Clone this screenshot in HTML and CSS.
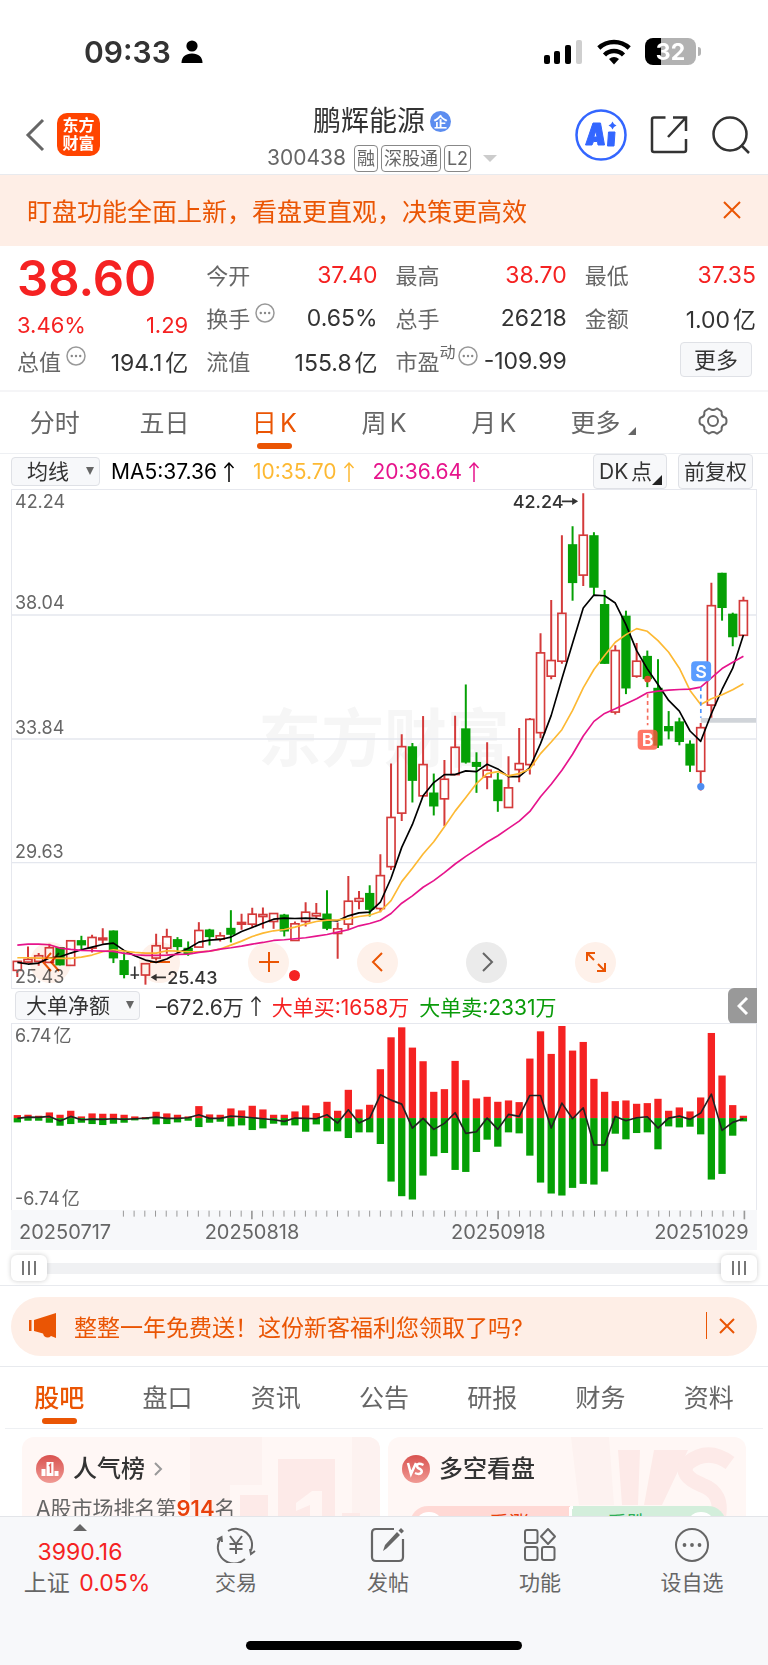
FILE: index.html
```html
<!DOCTYPE html>
<html lang="zh-CN">
<head>
  <meta charset="UTF-8" />
  <meta name="viewport" content="width=device-width, initial-scale=1.0"/>
  <title>鹏辉能源 300438</title>
  <link rel="stylesheet" href="styles.css">
</head>
<body>
  <div class="app">
    <div class="status">
      <span class="time">09:33</span>
      <svg class="person" width="22" height="24" viewBox="0 0 22 24"><circle cx="11" cy="6" r="5.6"/><path d="M0.5 23c0-6 4-9.5 10.500-9.500S21.500 17 21.500 23z"/></svg>
      <span class="grow"></span>
      <svg width="40" height="26" viewBox="0 0 40 26"><rect x="1" y="16" width="6" height="9" rx="2"/><rect x="11" y="12" width="6" height="13" rx="2"/><rect x="22" y="6" width="6" height="19" rx="2"/><rect x="33" y="1" width="6" height="24" rx="2" fill="#cfcfcf"/></svg>
      <svg width="34" height="26" viewBox="0 0 34 26"><g fill="none" stroke="#000" stroke-width="4.500"><path d="M1.800 9a22 22 0 0 1 30.400 0"/><path d="M7.500 16a13.500 13.500 0 0 1 19 0"/></g><path d="M17 25.500l-5-5.500a8 8 0 0 1 10 0z"/></svg>
      <span class="battery"><span class="battery-body">32</span><i></i></span>
    </div>

    <header class="nav">
      <button class="icon-btn back" aria-label="返回"><svg width="20" height="34" viewBox="0 0 20 34"><path d="M18 2L3 17l15 15" fill="none" stroke="#666" stroke-width="3"/></svg></button>
      <span class="logo">东方<br>财富</span>
      <div class="nav-title">
        <h1>鹏辉能源<span class="corp">企</span></h1>
        <div class="code"><span>300438</span><span class="tag">融</span><span class="tag">深股通</span><span class="tag">L2</span><i class="caret"></i></div>
      </div>
      <button class="icon-btn" aria-label="AI">
        <svg width="52" height="52" viewBox="0 0 52 52"><circle cx="26" cy="26" r="24.500" fill="none" stroke="#3366ff" stroke-width="2.500"/><path d="M18 14h7.500l4 22h-6.500l-.500-3.500h-4l-1.500 3.500H10.500zM20.800 22l-2 6h3.200zM33.500 23h6.500l-1 14h-6.500z" fill="#3366ff" fill-rule="evenodd" stroke="#3366ff" stroke-linejoin="round"/><path d="M37.500 12.500l1.500 2.500 2.500 1.500-2.500 1.500-1.500 2.500-1.500-2.500-2.500-1.500 2.500-1.500z" fill="#3366ff"/></svg>
      </button>
      <button class="icon-btn" aria-label="分享">
        <svg width="38" height="40" viewBox="0 0 38 40"><path d="M15.500 2.500H4q-2 0-2 2V35q0 2 2 2H34q2 0 2-2V24M23 2.500H36V16M36 2.500L18 22" fill="none" stroke="#333" stroke-width="2.500"/></svg>
      </button>
      <button class="icon-btn" aria-label="搜索">
        <svg width="40" height="40" viewBox="0 0 40 40"><circle cx="19" cy="19" r="16.500" fill="none" stroke="#333" stroke-width="2.500"/><path d="M30 30l8 8" stroke="#333" stroke-width="2.500"/></svg>
      </button>
    </header>

    <div class="banner">
      <span>盯盘功能全面上新，看盘更直观，决策更高效</span>
      <button class="icon-btn" aria-label="关闭"><svg width="18" height="18" viewBox="0 0 18 18"><path d="M1 1l16 16M17 1L1 17" stroke="#ea5504" stroke-width="2"/></svg></button>
    </div>

    <section class="quote">
      <div class="q-col q-main">
        <strong>38.60</strong>
        <div class="q red"><span>3.46%</span><span>1.29</span></div>
        <div class="q"><label>总值<svg class="dots"><use href="#more-dots"/></svg></label><b>194.1亿</b></div>
      </div>
      <div class="q-col">
        <div class="q"><label>今开</label><b class="red">37.40</b></div>
        <div class="q"><label>换手<svg class="dots"><use href="#more-dots"/></svg></label><b>0.65%</b></div>
        <div class="q"><label>流值</label><b>155.8亿</b></div>
      </div>
      <div class="q-col">
        <div class="q"><label>最高</label><b class="red">38.70</b></div>
        <div class="q"><label>总手</label><b>26218</b></div>
        <div class="q"><label>市盈<sup>动</sup><svg class="dots tight"><use href="#more-dots"/></svg></label><b>-109.99</b></div>
      </div>
      <div class="q-col">
        <div class="q"><label>最低</label><b class="red">37.35</b></div>
        <div class="q"><label>金额</label><b>1.00亿</b></div>
        <div class="q q-end"><button class="box-btn more">更多</button></div>
      </div>
    </section>

    <nav class="tabs">
      <button>分时</button>
      <button>五日</button>
      <button class="active">日K</button>
      <button>周K</button>
      <button>月K</button>
      <button>更多<i class="corner"></i></button>
      <button aria-label="设置"><svg width="30" height="28" viewBox="0 0 30 28"><path d="M10 2Q11 1 12 2Q15 4 18 2Q19 1 20 2L23 4Q24 5 23.600 7Q24 10 27 10.500Q28.500 11 28.500 14Q28.500 17 27 17.500Q24 18 23.600 21Q24 23 23 24L20 26Q19 27 18 26Q15 24 12 26Q11 27 10 26L7 24Q6 23 6.400 21Q6 18 3 17.500Q1.500 17 1.500 14Q1.500 11 3 10.500Q6 10 6.400 7Q6 5 7 4Z" fill="none" stroke="#666" stroke-width="2"/><circle cx="15" cy="14" r="5" fill="none" stroke="#666" stroke-width="2"/></svg></button>
    </nav>

    <section class="chart-area">
      <div class="bar ma-bar">
        <span class="select"><select aria-label="主图指标"><option>均线</option></select></span>
        <span class="ma ma5">MA5:37.36<svg class="up"><use href="#up"/></svg></span>
        <span class="ma ma10">10:35.70<svg class="up"><use href="#up"/></svg></span>
        <span class="ma ma20">20:36.64<svg class="up"><use href="#up"/></svg></span>
        <span class="grow"></span>
        <button class="box-btn dk">DK点<i class="corner"></i></button>
        <button class="box-btn">前复权</button>
      </div>

      <div class="kline">
        <svg id="kline" viewBox="33 27 2238 1497"></svg>
        <span class="y-label y1">42.24</span>
        <span class="y-label y2">38.04</span>
        <span class="y-label y3">33.84</span>
        <span class="y-label y4">29.63</span>
        <span class="y-label y5">25.43</span>
        <div class="tools">
          <button aria-label="最左"><svg viewBox="0 0 20 20"><path d="M10 1L2 10l8 9M18 1l-8 9 8 9"/></svg></button>
          <button aria-label="缩小"><svg viewBox="0 0 20 20"><path d="M0 10h20"/></svg></button>
          <button aria-label="放大" class="has-dot"><svg viewBox="0 0 20 20"><path d="M0 10h20M10 0v20"/></svg></button>
          <button aria-label="左移"><svg viewBox="0 0 20 20"><path d="M14 1l-9 9 9 9"/></svg></button>
          <button aria-label="右移" class="gray"><svg viewBox="0 0 20 20"><path d="M6 1l9 9-9 9"/></svg></button>
          <button aria-label="全屏"><svg viewBox="0 0 20 20"><path d="M1 9V1h8M1 1l7 7M19 11v8h-8M19 19l-7-7"/></svg></button>
        </div>
      </div>

      <div class="bar flow-bar">
        <span class="select wide"><select aria-label="副图指标"><option>大单净额</option></select></span>
        <span>–672.6万<svg class="up"><use href="#up"/></svg></span>
        <span class="red">大单买:1658万</span>
        <span class="green">大单卖:2331万</span>
        <button class="side" aria-label="展开"><svg width="12" height="18" viewBox="0 0 12 18"><path d="M10 1L2 9l8 8" fill="none" stroke="#fff" stroke-width="3"/></svg></button>
      </div>

      <div class="flow">
        <svg id="flow" viewBox="33 129 2238 561"></svg>
        <span class="y-label y1">6.74亿</span>
        <span class="y-label y5">-6.74亿</span>
      </div>
      <svg id="dates" class="dates" viewBox="33 690 2238 120"></svg>

      <div class="range">
        <input type="range" aria-label="起始" min="0" max="68" value="0">
        <input type="range" aria-label="结束" min="0" max="68" value="68">
      </div>
    </section>

    <section class="promo-wrap">
      <div class="promo">
        <svg width="28" height="26" viewBox="0 0 28 26"><path d="M0 7h2.500v11H0zM5 7l22-7v25l-5-2q-3 3-7 0l-1-2.500L5 18z" fill="#ea5504"/></svg>
        <span class="grow">整整一年免费送！这份新客福利您领取了吗?</span>
        <i class="divider"></i>
        <button class="icon-btn" aria-label="关闭"><svg width="16" height="16" viewBox="0 0 16 16"><path d="M1 1l14 14M15 1L1 15" stroke="#ea5504" stroke-width="2"/></svg></button>
      </div>
    </section>

    <nav class="tabs info-tabs">
      <button class="active">股吧</button>
      <button>盘口</button>
      <button>资讯</button>
      <button>公告</button>
      <button>研报</button>
      <button>财务</button>
      <button>资料</button>
    </nav>

    <section class="cards">
      <article class="card">
        <svg class="card-bg" width="200" height="100" viewBox="0 0 200 100"><path d="M10 0h72v48H50v52H10z" fill="#fdf2f0"/><path d="M172 0h28v100h-28z" fill="#fdf2f0"/><path d="M60 58h28v42H60zM98 22h57v78H98zM162 76h18v24h-18z" fill="#fdeae8"/><path d="M116 66l16-12h10v46h-12V68l-14 6z" fill="#fff6f4"/></svg>
        <h2><svg width="28" height="28" viewBox="0 0 28 28"><circle cx="14" cy="14" r="14" fill="url(#badge)"/><path d="M5.500 14h4v7h-4zM10.500 7h7v14h-7zM18.500 16h4v5h-4z" fill="#fff"/><path d="M13 11l1.500-1.500V18" fill="none" stroke="#e0605c" stroke-width="1.500"/></svg>人气榜<svg class="go" width="9" height="14" viewBox="0 0 9 14"><path d="M1 1l6 6-6 6" fill="none" stroke="#999" stroke-width="2"/></svg></h2>
        <p>A股市场排名第<b>914</b>名</p>
      </article>
      <article class="card">
        <svg class="card-bg" width="200" height="100" viewBox="0 0 200 100"><path d="M25 0h38l5 68H33z" fill="#fdf2f0"/><path d="M72 13h22l-2 55H76zM108 13h34l-26 55h-18z" fill="#fdeae8"/><path d="M184 26Q162 10 142 26q-10 12 14 22 22 8 16 34" fill="none" stroke="#fdeae8" stroke-width="15"/></svg>
        <h2><svg width="28" height="28" viewBox="0 0 28 28"><circle cx="14" cy="14" r="14" fill="url(#badge)"/><path d="M6 8l3 11 5-11M21.500 10q-6-3-6.500 1 0 2 3 3 3 2 1 4-2 2-6 0" fill="none" stroke="#fff" stroke-width="2.500"/></svg>多空看盘</h2>
        <div class="vote"><button class="bull">看涨</button><button class="bear">看跌</button></div>
      </article>
    </section>
  </div>

  <footer class="dock">
    <div class="dock-row">
      <a class="index" href="#"><i class="tri"></i><span class="red">3990.16</span><span class="name">上证 <em>0.05%</em></span></a>
      <a href="#"><svg width="40" height="36" viewBox="0 0 40 36"><g fill="none" stroke="#666" stroke-width="2"><path d="M12 4A16 16 0 0 1 35 23.500M29 32A16 16 0 0 1 5 11M1 12.500L5.500 10l.500 5M39 24L35 27l-1-5"/><path d="M14 9l6 8 6-8M13.500 17h13M13.500 22h13M20 17v10"/></g></svg>交易</a>
      <a href="#"><svg width="36" height="36" viewBox="0 0 36 36"><path d="M24 2H6Q2 2 2 6V30q0 4 4 4H29q4 0 4-4V12" fill="none" stroke="#666" stroke-width="2.200"/><path d="M13 24l2-6L27 5l3 3L16.500 21.500zM28.500 3.500L31 1l3 3-2.500 2.500z" fill="#666"/></svg>发帖</a>
      <a href="#"><svg width="34" height="36" viewBox="0 0 34 36"><g fill="none" stroke="#666" stroke-width="2"><rect x="2" y="3" width="12.500" height="13" rx="2"/><rect x="2" y="20" width="12.500" height="13" rx="2"/><rect x="19" y="20" width="12.500" height="13" rx="2"/><path d="M25 2l7 7.500L25 17l-7-7.500z" stroke-linejoin="round"/></g></svg>功能</a>
      <a href="#"><svg width="36" height="36" viewBox="0 0 36 36"><circle cx="18" cy="18" r="16" fill="none" stroke="#666" stroke-width="2"/><g fill="#666"><circle cx="10.500" cy="18" r="1.900"/><circle cx="18" cy="18" r="1.900"/><circle cx="25.500" cy="18" r="1.900"/></g></svg>设自选</a>
    </div>
    <div class="home"></div>
  </footer>

  <svg class="defs" width="0" height="0">
    <defs>
      <linearGradient id="badge" x1="0" y1="0" x2="0" y2="1"><stop offset="0" stop-color="#d9524f"/><stop offset="1" stop-color="#f09a94"/></linearGradient>
      <symbol id="more-dots" viewBox="0 0 20 20"><circle cx="10" cy="10" r="9" fill="none" stroke="#999" stroke-width="1.500"/><g fill="#888"><circle cx="5.800" cy="10" r="1.200"/><circle cx="10" cy="10" r="1.200"/><circle cx="14.200" cy="10" r="1.200"/></g></symbol>
      <symbol id="up" viewBox="0 0 12 22"><path d="M6 21V2M1.500 7L6 2l4.500 5" fill="none" stroke="currentColor" stroke-width="1.500"/></symbol>
    </defs>
  </svg>
  <script src="chart.js"></script>
</body>
</html>
```

FILE: styles.css
```css
* {
  box-sizing: border-box;
}
html, body {
  height: 100%;
}
body {
  margin: 0;
  display: flex;
  flex-direction: column;
  background: #fff;
  color: #333;
  font-family: Inter, "Noto Sans CJK SC", sans-serif;
  font-size: 22px;
}
button, select {
  font: inherit;
  color: inherit;
  background: none;
  border: none;
  padding: 0;
  margin: 0;
}
svg {
  display: block;
  flex: none;
}
.defs {
  position: absolute;
}
.app {
  flex: 1;
  min-height: 0;
  overflow-y: auto;
  scrollbar-width: none;
}
.grow {
  flex: 1;
}
.red {
  color: #f52222;
}
.green {
  color: #0a9b0a;
}
.icon-btn {
  display: flex;
}

/* status bar */
.status {
  display: flex;
  align-items: center;
  height: 103px;
  padding: 0 67px 0 84px;
  gap: 14px;
}
.time {
  font-size: 30px;
  font-weight: 600;
}
.person {
  margin-left: -4px;
}
.battery {
  display: flex;
  align-items: center;
  gap: 2px;
}
.battery-body {
  width: 51px;
  height: 27px;
  border-radius: 8px;
  background: linear-gradient(90deg, #000 16px, #b2b2b2 16px);
  color: #fff;
  font-size: 23px;
  line-height: 28px;
  font-weight: 700;
  text-align: center;
}
.battery i {
  width: 3px;
  height: 9px;
  border-radius: 0 3px 3px 0;
  background: #b2b2b2;
}

/* title bar */
.nav {
  display: flex;
  align-items: center;
  height: 72px;
  padding: 0 17px 8px 25px;
  gap: 23px;
  border-bottom: 1px solid #e8eaee;
}
.logo {
  width: 43px;
  height: 43px;
  margin-left: -11px;
  padding-top: 3px;
  border-radius: 10px;
  background: #ff4400;
  color: #fff;
  font-size: 16px;
  line-height: 18px;
  font-weight: 700;
  text-align: center;
}
.nav-title {
  flex: 1;
  display: flex;
  flex-direction: column;
  align-items: center;
  gap: 5px;
  padding: 6px 0 0 89px;
}
.nav h1 {
  display: flex;
  align-items: center;
  gap: 5px;
  margin: 0;
  font-size: 28px;
  line-height: 36px;
  font-weight: 400;
}
.corp {
  width: 21px;
  height: 21px;
  border-radius: 50%;
  background: #5c8df0;
  color: #fff;
  font-size: 14px;
  line-height: 21px;
  font-weight: 700;
  text-align: center;
}
.code {
  display: flex;
  align-items: center;
  gap: 3px;
  font-size: 21px;
  line-height: 28px;
  color: #666;
}
.code > :first-child {
  margin-right: 5px;
}
.tag {
  padding: 0 2px;
  border: 1px solid #888;
  border-radius: 4px;
  font-size: 18px;
  line-height: 25px;
}
.caret {
  margin-left: 9px;
  border: 7px solid transparent;
  border-top-color: #ccc;
  border-bottom: 0;
}

.banner {
  display: flex;
  align-items: center;
  justify-content: space-between;
  height: 71px;
  padding: 0 27px 2px;
  background: #feeee6;
  color: #ea5504;
  font-size: 25px;
}

/* quote numbers */
.quote {
  display: grid;
  grid-template-columns: repeat(4, minmax(0, 1fr));
  gap: 18px;
  height: 146px;
  padding: 6px 12px 0 17px;
  border-bottom: 2px solid #f5f5f7;
}
.q {
  display: flex;
  align-items: center;
  justify-content: space-between;
  height: 43px;
  white-space: nowrap;
  text-autospace: normal;
}
.q label {
  display: flex;
  align-items: center;
  color: #666;
}
.q b {
  padding-top: 2px;
  font-size: 23px;
  font-weight: 400;
}
.q sup {
  align-self: flex-start;
  font-size: 16px;
  line-height: 16px;
}
.q-end {
  justify-content: flex-end;
}
.q-main strong {
  display: block;
  height: 60px;
  color: #f52222;
  font-size: 49px;
  line-height: 54px;
  font-weight: 600;
}
.q-main .q:nth-child(2) {
  height: 26px;
}
.dots {
  width: 20px;
  height: 20px;
  margin: 0 0 8px 5px;
}
.dots.tight {
  margin-left: 2px;
}
.box-btn {
  position: relative;
  height: 35px;
  padding: 0 5px;
  border: 1px solid #dfe1e6;
  border-radius: 4px;
  background: #f7f8fa;
  font-size: 21px;
  line-height: 30px;
  text-autospace: normal;
}
.box-btn.more {
  width: 72px;
  margin-right: 4px;
  font-size: 22px;
}
.box-btn .corner {
  position: absolute;
  right: 4px;
  bottom: 3px;
  border-color: transparent #222 #222 transparent;
}
.corner {
  border: 5px solid;
  border-color: transparent #666 #666 transparent;
}

/* tabs */
.tabs {
  display: flex;
  height: 62px;
  border-bottom: 1px solid #eef0f3;
}
.tabs button {
  position: relative;
  flex: 1;
  display: flex;
  align-items: center;
  justify-content: center;
  padding-bottom: 4px;
  color: #666;
  font-size: 25px;
  text-autospace: normal;
}
.tabs .corner {
  align-self: flex-end;
  border-width: 4px;
  margin: 0 0 14px 8px;
}
.tabs .active {
  color: #ea5504;
}
.tabs .active::after {
  content: "";
  position: absolute;
  left: 50%;
  bottom: 4px;
  width: 35px;
  height: 6px;
  margin-left: -17px;
  border-radius: 3px;
  background: #ea5504;
}
.info-tabs {
  margin: 0 5px;
}
.info-tabs .active {
  font-weight: 500;
}

/* chart */
.chart-area {
  padding: 0 11px;
}
.bar {
  display: flex;
  align-items: center;
  height: 35px;
  font-size: 21px;
  white-space: nowrap;
}
.bar > span {
  display: flex;
  align-items: center;
}
.select {
  position: relative;
  width: 89px;
  height: 29px;
}
.select select {
  width: 100%;
  height: 100%;
  padding-left: 15px;
  appearance: none;
  border: 1px solid #dfe1e6;
  border-radius: 4px;
  background: #f7f8fa;
  line-height: 27px;
}
.select::after {
  content: "";
  position: absolute;
  right: 6px;
  top: 10px;
  border: 4px solid transparent;
  border-top: 8px solid #666;
  border-bottom: 0;
}
.select.wide {
  width: 125px;
}
.wide select {
  padding-left: 10px;
}
.up {
  width: 12px;
  height: 22px;
  margin-left: 6px;
}
.ma {
  margin-right: 7px;
}
.ma-bar {
  gap: 11px;
  padding-right: 4px;
}
.ma5 {
  color: #000;
}
.ma10 {
  color: #fdb933;
}
.ma20 {
  color: #e6148c;
}
.dk {
  padding-right: 14px;
}
.kline, .flow {
  position: relative;
  border: 1px solid #e6e8ee;
  border-bottom: 0;
}
.kline > svg, .flow > svg, .dates {
  width: 100%;
  height: auto;
}
.y-label {
  position: absolute;
  left: 3px;
  color: #666;
  font-size: 18px;
  line-height: 22px;
  text-autospace: normal;
}
.y1 { top: 1px; }
.y2 { bottom: 75%; }
.y3 { bottom: 50%; }
.y4 { bottom: 25%; }
.y5 { bottom: 0; }
.tools {
  position: absolute;
  left: 18px;
  bottom: 5px;
  display: flex;
  gap: 68px;
  mix-blend-mode: multiply;
}
.tools button {
  position: relative;
  display: flex;
  align-items: center;
  justify-content: center;
  width: 41px;
  height: 41px;
  border-radius: 50%;
  background: #fef1ea;
}
.tools svg {
  width: 20px;
  height: 20px;
  fill: none;
  stroke: #ea5504;
  stroke-width: 2;
}
.tools .gray {
  background: #ebebeb;
}
.tools .gray svg {
  stroke: #666;
}
.has-dot::after {
  content: "";
  position: absolute;
  left: 41px;
  top: 28px;
  width: 11px;
  height: 11px;
  border-radius: 50%;
  background: #f52222;
}
.flow-bar {
  position: relative;
  gap: 10px;
  padding-left: 4px;
  border-top: 1px solid #e6e8ee;
}
.flow-bar .wide {
  margin-right: 6px;
}
.side {
  position: absolute;
  right: 0;
  top: -1px;
  display: flex;
  align-items: center;
  justify-content: center;
  width: 29px;
  height: 36px;
  border-radius: 6px 0 0 6px;
  background: #999;
}
.dates {
  background: #f7f8fa;
}
.range {
  position: relative;
  height: 35px;
}
.range::before {
  content: "";
  position: absolute;
  left: 4px;
  right: 4px;
  top: 13px;
  height: 11px;
  background: #f0f1f3;
}
.range input {
  position: absolute;
  left: 0;
  top: 5px;
  width: 100%;
  height: 26px;
  margin: 0;
  appearance: none;
  background: none;
  pointer-events: none;
}
.range input::-webkit-slider-thumb {
  appearance: none;
  width: 36px;
  height: 26px;
  border-radius: 6px;
  background: linear-gradient(90deg, #777 2px, transparent 2px, transparent 6px, #777 6px, #777 8px, transparent 8px, transparent 12px, #777 12px) center / 14px 14px no-repeat, #fff;
  box-shadow: 0 0 5px rgba(0, 0, 0, 0.2);
  pointer-events: auto;
}

/* promo */
.promo-wrap {
  padding: 11px 11px 10px;
  border-top: 1px solid #e8eaee;
  border-bottom: 1px solid #e8eaee;
}
.promo {
  display: flex;
  align-items: center;
  height: 59px;
  padding: 0 22px 2px 18px;
  gap: 17px;
  border-radius: 30px;
  background: #feeee6;
  color: #ea5504;
  font-size: 23px;
}
.divider {
  width: 1px;
  height: 27px;
  margin-right: -5px;
  background: #ea5504;
}

/* cards */
.cards {
  display: grid;
  grid-template-columns: 1fr 1fr;
  gap: 8px;
  padding: 8px 22px;
}
.card {
  position: relative;
  height: 150px;
  padding: 14px;
  border-radius: 12px;
  background: #fff7f5;
  overflow: hidden;
}
.card-bg {
  position: absolute;
  right: 0;
  top: 0;
}
.card h2 {
  position: relative;
  display: flex;
  align-items: center;
  gap: 9px;
  margin: 0;
  font-size: 24px;
  line-height: 36px;
  font-weight: 500;
}
.card p {
  position: relative;
  margin: 7px 0 0;
  color: #666;
  font-size: 21px;
  line-height: 28px;
}
.card p b {
  color: #e8410c;
  font-size: 22px;
  font-weight: 600;
}
.vote {
  position: relative;
  display: flex;
  height: 36px;
  margin: 19px 6px 0 8px;
  border-radius: 18px;
  background: linear-gradient(95deg, #ffd9d5 50%, #fff 50%, #fff 51%, #d3eedb 51%);
}
.vote::before, .vote::after {
  content: "";
  position: absolute;
  left: 4px;
  top: 6px;
  width: 30px;
  height: 30px;
  border-radius: 50%;
  background: #fff;
}
.vote::after {
  left: auto;
  right: 10px;
}
.vote button {
  flex: 1;
  font-size: 20px;
  line-height: 28px;
}
.bull {
  padding-left: 40px;
  color: #e8410c;
}
.bear {
  padding-right: 40px;
  color: #2fae57;
}

/* bottom bar */
.dock {
  flex: none;
  position: relative;
  border-top: 1px solid #e3e5e9;
  background: #f7f8fa;
}
.dock-row {
  display: flex;
  height: 124px;
}
.dock a {
  flex: 1;
  display: flex;
  flex-direction: column;
  align-items: center;
  padding-top: 10px;
  gap: 5px;
  color: #666;
  font-size: 21px;
  line-height: 30px;
  text-decoration: none;
}
.dock .index {
  flex: none;
  width: 160px;
  padding: 7px 0 0;
  gap: 0;
  font-size: 23px;
}
.index .red {
  margin: 6px 0 1px;
}
.index .name {
  padding-left: 14px;
}
.dock em {
  margin-left: 3px;
  color: #f52222;
  font-style: normal;
}
.tri {
  border: 7px solid transparent;
  border-bottom-color: #666;
  border-top: 0;
}
.home {
  width: 36%;
  height: 9px;
  margin: 0 auto 15px;
  border-radius: 5px;
  background: #000;
}
```

FILE: chart.js
```js
// x of candle i, in viewBox units (3 units per css px)
const X = i => 49 + 32.12 * i;

// [type, high, top, bottom, low]
const candles = [
  ['r',1445,1445,1472,1492],['r',1400,1439,1447,1449],['r',1420,1428,1445,1458],['r',1392,1404,1448,1448],['g',1402,1402,1457,1457],
  ['r',1383,1383,1457,1457],['g',1368,1381,1397,1408],['r',1365,1373,1405,1418],['r',1345,1375,1380,1392],['g',1352,1352,1436,1450],
  ['g',1418,1441,1486,1496],['k',1460,1486,1486,1498],['r',1452,1452,1486,1515],['r',1362,1398,1435,1442],['r',1347,1371,1405,1422],
  ['g',1372,1378,1402,1415],['g',1385,1404,1423,1428],['r',1327,1352,1402,1402],['g',1347,1349,1372,1397],['r',1357,1368,1378,1385],
  ['g',1291,1344,1365,1388],['r',1302,1328,1333,1350],['r',1284,1303,1333,1342],['r',1283,1304,1310,1346],['r',1301,1301,1325,1347],
  ['g',1302,1304,1355,1370],['r',1325,1332,1382,1382],['r',1267,1297,1325,1340],['r',1269,1301,1308,1317],['g',1231,1301,1347,1351],
  ['r',1328,1347,1361,1437],['r',1188,1264,1333,1350],['r',1233,1256,1264,1288],['g',1216,1239,1290,1310],['r',1123,1187,1286,1297],
  ['r',850,1012,1160,1170],['r',762,799,999,1023],['g',788,798,902,967],['r',707,853,947,947],['g',880,937,979,1006],
  ['r',839,897,956,1038],['r',706,801,883,883],['g',612,744,847,850],['g',816,845,860,938],['r',786,870,890,927],
  ['g',878,898,963,995],['r',828,923,982,982],['r',743,850,868,906],['r',713,717,853,883],['r',458,517,757,774],
  ['r',358,540,587,596],['r',163,398,542,550],['g',136,190,307,360],['r',37,163,283,316],['g',154,163,321,345],
  ['g',328,370,550,550],['r',494,510,695,702],['g',390,405,624,641],['r',487,542,587,592],['g',510,526,596,620],
  ['g',536,622,796,803],['g',692,737,753,777],['g',712,723,785,795],['g',780,790,856,875],['r',728,742,873,931],
  ['r',306,375,674,712],['g',276,276,382,420],['g',396,399,470,497],['r',348,360,464,464]
];
const ma5 = [1448,1453,1450,1435,1431,1420,1410,1402,1394,1390,1412,1428,1441,1448,1438,1420,1406,1387,1381,1379,1372,1355,1343,1330,1318,1315,1316,1315,1316,1321,1323,1308,1299,1297,1267,1195,1102,1033,947,907,883,883,872,874,852,866,889,889,862,790,705,595,488,382,343,345,367,432,510,565,612,660,692,752,783,700,627,563,463];
const ma10 = [1434,1434,1435,1435,1436,1436,1432,1426,1416,1410,1414,1418,1420,1420,1413,1414,1416,1416,1414,1408,1396,1384,1370,1360,1353,1349,1342,1333,1325,1321,1320,1317,1310,1306,1295,1262,1205,1165,1122,1085,1040,993,952,910,880,874,887,880,866,820,785,748,690,622,567,525,485,462,444,452,480,515,563,630,672,655,643,628,610];
const ma20 = [1396,1393,1393,1395,1405,1409,1412,1413,1414,1415,1421,1425,1427,1427,1426,1424,1423,1418,1414,1408,1404,1399,1393,1388,1382,1380,1377,1374,1369,1364,1357,1350,1338,1331,1321,1301,1270,1248,1222,1202,1178,1152,1129,1108,1086,1067,1045,1023,994,950,912,870,822,767,723,699,685,670,655,637,632,629,627,626,620,592,564,545,527];

// big order buy / sell bar ends and net line
const buy = [403,402,405,395,402,390,407,398,399,399,402,407,409,393,398,402,407,376,401,402,383,389,375,386,402,402,392,374,397,363,390,327,386,372,265,169,139,200,241,333,325,240,298,353,348,363,359,364,233,151,219,135,209,183,294,333,361,359,369,367,354,390,380,392,350,156,284,373,405];
const sell = [425,420,420,426,435,430,426,430,433,429,426,419,416,431,430,425,420,439,426,423,437,434,448,443,429,434,434,453,431,452,452,472,455,455,490,603,647,657,585,527,517,568,574,514,477,498,455,458,525,606,639,645,622,610,612,573,459,476,457,455,506,437,440,438,461,597,580,465,422];
const net = [413,409,410,407,421,407,417,415,416,414,416,414,412,409,413,413,411,402,413,413,406,408,411,414,417,422,412,413,414,402,427,387,427,412,342,358,370,442,413,446,428,396,458,453,412,446,401,407,344,344,442,367,414,381,493,493,407,420,411,408,442,412,406,416,397,340,449,425,414];

const RED = '#d43a3a', GREEN = '#05a005';

function line(data, color, width) {
  const pts = data.map((y, i) => X(i) + ',' + y).join(' ');
  return `<polyline points="${pts}" fill="none" stroke="${color}" stroke-width="${width}" stroke-linejoin="round"/>`;
}

function drawKline() {
  let s = '<text x="1152" y="842" font-size="189" font-weight="700" text-anchor="middle" fill="#f6f6f6">东方财富</text>';
  [403, 776, 1148].forEach(y => {
    s += `<path d="M33 ${y}H2271" stroke="#e4e7ee" stroke-width="4"/>`;
  });
  s += '<path d="M2105 720H2271" stroke="#d0d4d9" stroke-width="14"/>';
  candles.forEach(([t, high, top, bottom, low], i) => {
    const x = X(i);
    if (t === 'k') {
      s += `<path d="M${x} ${high}V${low}M${x - 13} ${top}H${x + 13}" stroke="#333" stroke-width="5"/>`;
    } else if (t === 'g') {
      s += `<path d="M${x} ${high}V${low}" stroke="${GREEN}" stroke-width="6"/><rect x="${x - 14}" y="${top}" width="28" height="${bottom - top}" fill="${GREEN}"/>`;
    } else {
      s += `<path d="M${x} ${high}V${top}M${x} ${bottom}V${low}" stroke="${RED}" stroke-width="6"/><rect x="${x - 12}" y="${top}" width="24" height="${bottom - top}" fill="none" stroke="${RED}" stroke-width="5"/>`;
    }
  });
  s += line(ma5, '#000', 5) + line(ma10, '#fdb933', 5) + line(ma20, '#e6148c', 5);

  // price extremes
  s += '<g font-size="54" font-weight="500" fill="#333"><text x="1539" y="80">42.24</text><text x="500" y="1513">25.43</text></g>';
  s += '<path d="M1687 61H1722M462 1493H496" stroke="#333" stroke-width="5"/><path d="M1736 61l-18-11v22zM450 1493l18-11v22z" fill="#333"/>';

  // buy / sell marks
  s += '<g fill="none" stroke-width="5" stroke-dasharray="12 10"><path d="M1945 640V735" stroke="#f56e5e"/><path d="M2105 620V712" stroke="#4d94ff"/></g>';
  s += '<circle cx="1945" cy="596" r="10" fill="#e04b2a"/><circle cx="2105" cy="919" r="11" fill="#4d8cf0"/>';
  s += '<rect x="1915" y="748" width="60" height="60" rx="12" fill="#ff5540" fill-opacity="0.8"/><rect x="2076" y="542" width="60" height="60" rx="12" fill="#5a9cff"/>';
  s += '<g font-size="54" font-weight="600" fill="#fff" text-anchor="middle"><text x="1945" y="798">B</text><text x="2106" y="592">S</text></g>';
  document.getElementById('kline').innerHTML = s;
}

function drawFlow() {
  let s = '';
  buy.forEach((top, i) => {
    const x = X(i) - 11;
    s += `<rect x="${x}" y="${top}" width="22" height="${412 - top}" fill="#f52222"/>`;
    s += `<rect x="${x}" y="412" width="22" height="${sell[i] - 412}" fill="${GREEN}"/>`;
  });
  document.getElementById('flow').innerHTML = s + line(net, '#222', 5);
}

function drawDates() {
  let s = '';
  for (let i = 10; i < 69; i++) {
    const major = i === 22 || i === 45 || i === 68;
    s += `<path d="M${X(i)} 692V${major ? 718 : 710}" stroke="#999" stroke-width="${major ? 5 : 3}"/>`;
  }
  s += '<g font-size="60" fill="#666"><text x="57" y="777">20250717</text><text x="756" y="777" text-anchor="middle">20250818</text><text x="1495" y="777" text-anchor="middle">20250918</text><text x="2246" y="777" text-anchor="end">20251029</text></g>';
  document.getElementById('dates').innerHTML = s;
}

drawKline();
drawFlow();
drawDates();
```
